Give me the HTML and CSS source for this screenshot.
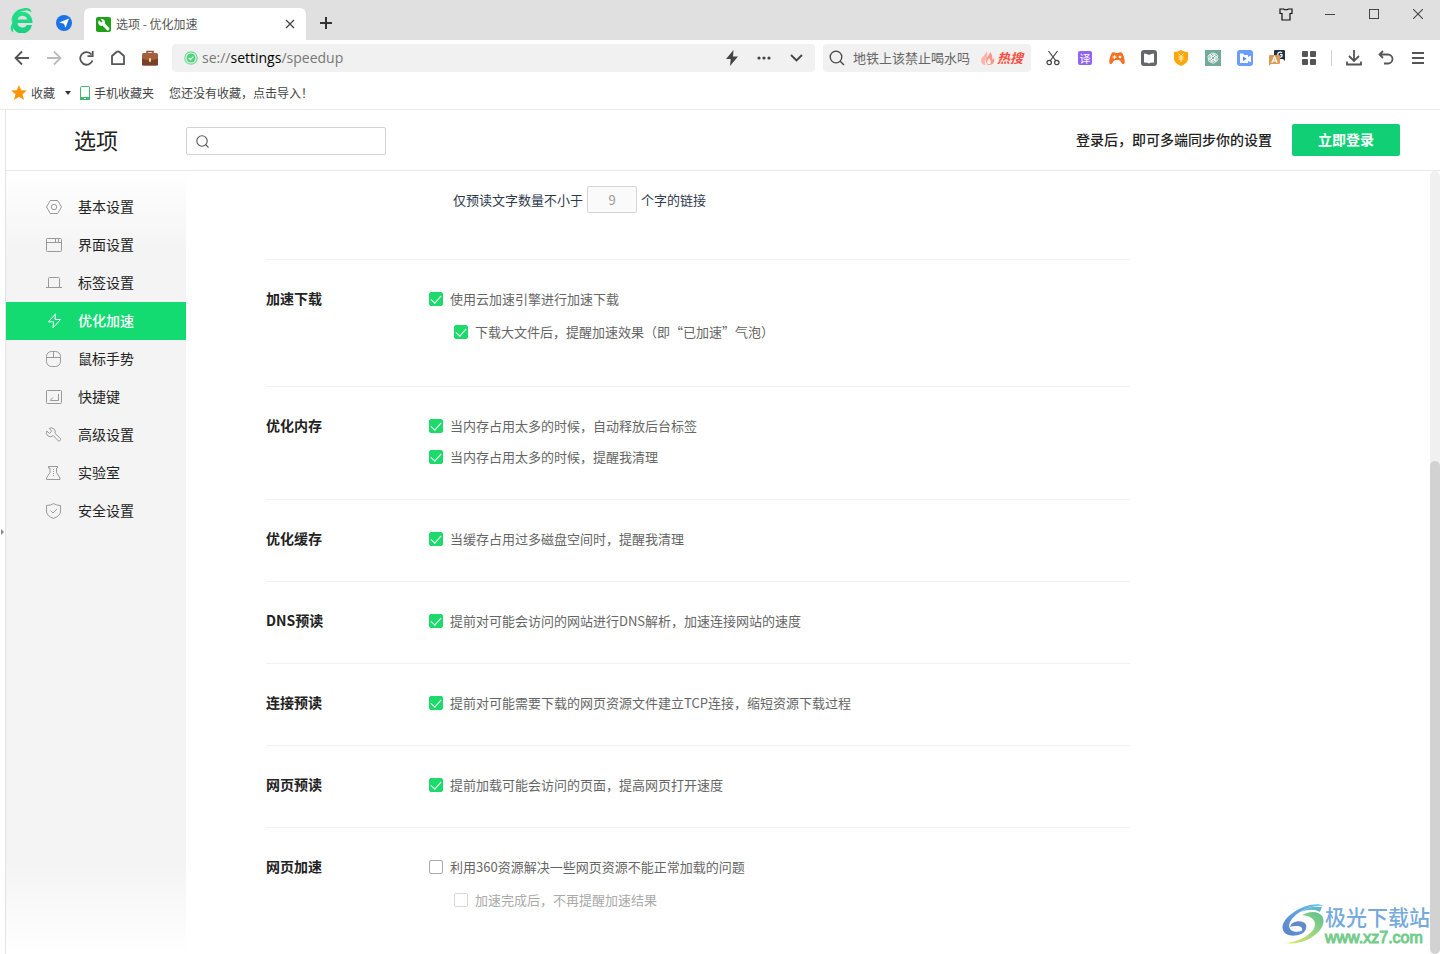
FILE: index.html
```html
<!DOCTYPE html>
<html lang="zh-CN">
<head>
<meta charset="utf-8">
<title>选项 - 优化加速</title>
<link rel="stylesheet" href="styles.css">
</head>
<body>
<header class="chrome">
  <div class="tabbar">
    <button class="logo" aria-label="浏览器菜单"><svg width="24" height="26" viewBox="0 0 24 26"><defs><linearGradient id="lg" x1="0" y1="0" x2="0" y2="1"><stop offset="0" stop-color="#22e08a"/><stop offset="1" stop-color="#17cf80"/></linearGradient></defs><path d="M22.500 16H7.500a5 5 0 0 0 9.300 2h5.200A10 10 0 0 1 2.200 15C2.200 9 6.500 4.800 12.300 4.800S22.700 9 22.500 16zM7.600 12.500h9.700a5 5 0 0 0-9.700 0z" fill="url(#lg)" fill-rule="evenodd"/><path d="M1.500 15C1 7 7 2 14 1.200c4-.5 7.500.8 7.500 4.300C18 2.500 13 3.500 9 5.500 5 7.500 3 11 1.500 15zM2.500 16C0 20 0 24 3.500 25.500 2.500 23 3 21 4.500 20z" fill="#1edc86"/></svg></button>
    <button class="pinned" aria-label="导航"><svg width="16" height="16"><circle cx="8" cy="8" r="8" fill="#1a73e8"/><path d="M13 3.500 9.500 12.800 8 8.800 3.200 7.600z" fill="#fff"/></svg></button>
    <div class="tab">
      <svg width="15" height="15"><rect width="15" height="15" rx="2" fill="#21a01a"/><path d="M3 3.200 5.200 5.400 6.500 4.200 4.500 2.200A3.400 3.400 0 0 1 8.900 6.600L13 10.800A1.500 1.500 0 0 1 10.800 13L6.600 8.800A3.500 3.500 0 0 1 2.200 4.800z" fill="#fff"/></svg>
      <span class="tab-title">选项 - 优化加速</span>
      <button class="tab-close" aria-label="关闭标签"><svg width="10" height="10"><path d="M1 1l8 8M9 1 1 9" stroke="#444" stroke-width="1.3"/></svg></button>
    </div>
    <button class="new-tab" aria-label="新标签"><svg width="12" height="12"><path d="M6 0v12M0 6h12" stroke="#333" stroke-width="2"/></svg></button>
    <div class="window-controls">
      <button aria-label="皮肤"><svg width="14" height="13" fill="none" stroke="#111" stroke-width="1.200"><path d="M1 1h3.500q2.500 1.500 5 0H13v4.500h-2V12H3V5.500H1z"/></svg></button>
      <button aria-label="最小化"><svg width="10" height="10"><path d="M0 5.500h10" stroke="#444"/></svg></button>
      <button aria-label="最大化"><svg width="10" height="10"><rect x=".5" y=".5" width="9" height="9" fill="none" stroke="#444"/></svg></button>
      <button aria-label="关闭"><svg width="10" height="10"><path d="M0 0l10 10M10 0 0 10" stroke="#444" stroke-width="1.100"/></svg></button>
    </div>
  </div>

  <div class="toolbar">
    <div class="tools">
      <button aria-label="后退"><svg width="16" height="16" fill="none" stroke="#555" stroke-width="1.800"><path d="M15 8H2M8 1.500 1.500 8 8 14.500"/></svg></button>
      <button aria-label="前进"><svg width="16" height="16" fill="none" stroke="#bbb" stroke-width="1.800"><path d="M1 8h13M8 1.500 14.500 8 8 14.500"/></svg></button>
      <button aria-label="刷新"><svg width="16" height="16" fill="none" stroke="#555" stroke-width="1.800"><path d="M14.500 10.500A6.300 6.300 0 1 1 13.500 4.500"/><path d="M9.500 6.200h5.200V1"/></svg></button>
      <button aria-label="主页"><svg width="16" height="16" fill="none" stroke="#555" stroke-width="1.800" stroke-linejoin="round"><path d="M2 6 6.500 2q1.500-1 3 0L14 6v8.200H2z"/></svg></button>
      <button aria-label="工具箱"><svg width="18" height="18"><path d="M6 5V2.500h6V5" fill="none" stroke="#9b4a2d" stroke-width="1.500"/><rect x="1" y="4" width="16" height="12.500" rx="1.500" fill="#a3603f"/><path d="M1 9.500q8 3 16 0V15q0 1.500-1.500 1.500h-13Q1 16.500 1 15z" fill="#79402a"/><rect x="8" y="9" width="2" height="4" rx="1" fill="#ffd98a"/></svg></button>
    </div>
    <div class="address">
      <svg width="14" height="14"><circle cx="7" cy="7" r="6.200" fill="none" stroke="#6fdc93" stroke-width="1.200"/><circle cx="7" cy="7" r="4.500" fill="#4fd47c"/><path d="M4.800 7 6.500 8.600 9.400 5.600" fill="none" stroke="#fff" stroke-width="1.300"/></svg>
      <div class="url" role="textbox" aria-label="地址栏" contenteditable="true" spellcheck="false">se://<span class="host">settings</span>/speedup</div>
      <button aria-label="极速模式"><svg width="14" height="16"><path d="M8.500 0 1 9h4.700L5 16l8-9.500H8z" fill="#444"/></svg></button>
      <button aria-label="更多"><svg width="14" height="4" fill="#444"><circle cx="2" cy="2" r="1.600"/><circle cx="7" cy="2" r="1.600"/><circle cx="12" cy="2" r="1.600"/></svg></button>
      <button aria-label="展开"><svg width="13" height="8" fill="none" stroke="#444" stroke-width="1.800"><path d="M1 1l5.500 5.500L12 1"/></svg></button>
    </div>
    <div class="search">
      <svg width="16" height="16" fill="none" stroke="#444" stroke-width="1.300"><circle cx="7" cy="7" r="5.800"/><path d="M11.200 11.200 15 15"/></svg>
      <input class="search-input" type="text" aria-label="搜索" placeholder="地铁上该禁止喝水吗">
      <a class="hot" href="#"><svg width="14" height="14"><path d="M5 0C6 3 1 5 0 9c0 3 2 5 5 5-2-2-1-5 1-7 0-3 1-4-1-7z" fill="#ffb3ab"/><path d="M9 1c0 3-4 5-4 9 0 2 1 4 3 4 4 0 6-3 5-7l-2 2c1-3 0-6-2-8z" fill="#ff948a"/><path d="M8 7c-3 4-2 6 0 6s3-2 0-6z" fill="#fff0ee"/></svg><span>热搜</span></a>
    </div>
    <div class="tools">
      <button aria-label="截图"><svg width="14" height="16" fill="none" stroke="#444" stroke-width="1.200"><path d="M2.500 1 10 11M11.500 1 4 11"/><circle cx="3.200" cy="12.500" r="2.200"/><circle cx="10.800" cy="12.500" r="2.200"/></svg></button>
      <button aria-label="翻译"><span class="badge-translate">译</span></button>
      <button aria-label="游戏"><svg width="16" height="14"><path d="M2.500 2.500C4 0 6 2 8 2s4-2 5.500.5C15.500 6 16.500 12 15 13c-2 1-3-3-5-4H6c-2 1-3 5-5 4C-.5 12 .5 6 2.500 2.500z" fill="#f57224"/><path d="M5.500 4v4M3.500 6h4" stroke="#fff" stroke-width="1.200"/><circle cx="11" cy="6" r="1.300" fill="#fff"/></svg></button>
      <button aria-label="阅读"><svg width="16" height="16"><rect width="16" height="16" rx="3" fill="#66676d"/><path d="M3 3.500q3 0 5 1.500 2-1.500 5-1.500v9q-3-.5-5 1-2-1.500-5-1z" fill="#fff"/></svg></button>
      <button aria-label="优惠"><svg width="16" height="16"><path d="M8 0q3 2 7 2v7q0 4-7 7-7-3-7-7V2q4 0 7-2z" fill="#ffa60a"/><path d="M5.500 3.500 8 6.500l2.500-3M5.500 7h5M5.500 9.200h5M8 6.500V12" stroke="#fff3c9" stroke-width="1" fill="none"/></svg></button>
      <button aria-label="AI 助手"><svg width="16" height="16"><rect width="16" height="16" fill="#74aa9c"/><g fill="none" stroke="#fff" stroke-width=".8"><path id="petal" d="M5 9.800V5.500a2.600 2.600 0 0 1 5-1M8 6.300 11.300 8.200"/><use href="#petal" transform="rotate(60 8 8)"/><use href="#petal" transform="rotate(120 8 8)"/><use href="#petal" transform="rotate(180 8 8)"/><use href="#petal" transform="rotate(240 8 8)"/><use href="#petal" transform="rotate(300 8 8)"/></g></svg></button>
      <button aria-label="录屏"><svg width="16" height="16"><rect width="16" height="16" rx="3" fill="#6a9dff"/><path d="M3 3.500h3l1.500 1.500H11v2l3-1.500v7L11 11v2H3z" fill="#fff"/><path d="M6 6.500v4.500L9.500 8.800z" fill="#4c82f2"/></svg></button>
      <button aria-label="文字转换"><svg width="16" height="16"><path d="M6 0h9q1 0 1 1v10l-2-2H5V1q0-1 1-1z" fill="#1f3349"/><path d="M13 2.800a2.500 2.500 0 1 0 0 3.500V4.700h-2" fill="none" stroke="#fff" stroke-width="1.200"/><path d="M1 5h9q1 0 1 1v7q0 1-1 1H2l-2 2V6q0-1 1-1z" fill="#dc9a57"/><path d="M2.800 12.800 5.500 6.800l2.700 6M4 10.800h3" fill="none" stroke="#fff" stroke-width="1.200"/></svg></button>
      <button aria-label="扩展"><svg width="14" height="14" fill="#555"><rect width="6" height="6" rx="1"/><rect x="8" width="6" height="6" rx="1"/><rect y="8" width="6" height="6" rx="1"/><rect x="8" y="8" width="6" height="6" rx="1"/></svg></button>
    </div>
    <div class="separator"></div>
    <div class="tools">
      <button aria-label="下载"><svg width="16" height="16" fill="none" stroke="#555" stroke-width="1.800"><path d="M8 0v10.500M3 6l5 5 5-5M1 11.500v3h14v-3"/></svg></button>
      <button aria-label="恢复"><svg width="16" height="16" fill="none" stroke="#555" stroke-width="1.800"><path d="M2 4.500h8a4.500 4.500 0 0 1 0 9H6M5 1 1.500 4.500 5 8"/></svg></button>
      <button aria-label="菜单"><svg width="12" height="12"><path d="M0 1h12M0 6h12M0 11h12" stroke="#555" stroke-width="1.800"/></svg></button>
    </div>
  </div>

  <nav class="bookmarks" aria-label="收藏栏">
    <button class="bookmark"><svg width="16" height="15"><path d="M8 0l2.200 5.200 5.800.4-4.500 3.700L13 15l-5-3.200L3 15l1.500-5.700L0 5.600l5.800-.4z" fill="#ff9500"/></svg><span>收藏</span></button>
    <button class="caret" aria-label="展开收藏"><svg width="6" height="4"><path d="M0 0h6L3 4z" fill="#333"/></svg></button>
    <button class="bookmark"><svg width="10" height="14"><rect x=".5" y=".5" width="9" height="13" rx="1" fill="#fff" stroke="#3fba6e"/><path d="M0 11h10v3H0z" fill="#3fba6e"/><path d="M4 12.500h2" stroke="#fff"/></svg><span>手机收藏夹</span></button>
    <a class="import" href="#">您还没有收藏，点击导入！</a>
  </nav>
</header>

<div class="viewport">
  <button class="side-handle" aria-label="展开侧栏"><svg width="3" height="6"><path d="M0 0l3 3-3 3z" fill="#888"/></svg></button>
  <div class="page">
    <header class="page-header">
      <h1>选项</h1>
      <label class="page-search"><svg width="13" height="13" fill="none" stroke="#555" stroke-width="1.100"><circle cx="6" cy="6" r="5.200"/><path d="M9.700 9.700 12.500 12.500"/></svg><input type="text" aria-label="搜索设置"></label>
      <p class="login-hint">登录后，即可多端同步你的设置</p>
      <button class="login">立即登录</button>
    </header>
    <div class="page-body">
      <nav class="sidebar" aria-label="设置分类">
        <a href="#"><svg viewBox="0 0 16 16"><path d="M4.300 1.500h7.400L15.500 8l-3.800 6.500H4.300L.5 8z"/><circle cx="8" cy="8" r="2.700"/></svg>基本设置</a>
        <a href="#"><svg viewBox="0 0 16 16"><rect x=".5" y="1.500" width="15" height="13" rx="1"/><path d="M.5 5.500h15M9.500 2v3M12.500 2v3"/></svg>界面设置</a>
        <a href="#"><svg viewBox="0 0 16 16"><path d="M2.500 12.500v-9q0-1 1-1h9q1 0 1 1v9M0 12.500h16"/></svg>标签设置</a>
        <a href="#" class="active" aria-current="page"><svg viewBox="0 0 16 16"><path d="M9.500.8 2.500 8.800h5L7 15l7.500-8.500H9z"/></svg>优化加速</a>
        <a href="#"><svg viewBox="0 0 16 16"><rect x=".5" y=".5" width="14" height="15" rx="5"/><path d="M.5 6.500h14M7.500.5v6"/></svg>鼠标手势</a>
        <a href="#"><svg viewBox="0 0 16 16"><rect x=".5" y="1.500" width="15" height="13" rx="1"/><path d="M12.500 5v6.500h-8M7 8.500l-2.800 3"/></svg>快捷键</a>
        <a href="#"><svg viewBox="0 0 16 16"><path d="M3.300 1.400A4 4 0 0 1 9 6.300l5.400 5.200q.6 1-.2 2t-2 .3L7.300 8.500A4 4 0 0 1 .8 4L3.500 6.400 5.700 4.300z"/></svg>高级设置</a>
        <a href="#"><svg viewBox="0 0 16 16"><path d="M2.500 1.500h9v1.500h-1v4.500l3.500 5.500v1.500H.5V13L4 7.500V3H2.500z"/><path d="M7.500 4v8" stroke-dasharray="1 1"/></svg>实验室</a>
        <a href="#"><svg viewBox="0 0 16 16"><path d="M7.500.6q3 1.900 7 1.900V8q0 5-7 7.400Q.5 13 .5 8V2.500q4 0 7-1.900z"/><path d="M4.500 7.500 7 10l4-4"/></svg>安全设置</a>
      </nav>
      <main class="settings">
        <section class="row first">
          <div class="count"><label for="min">仅预读文字数量不小于</label><input id="min" type="text" value="9" disabled><span>个字的链接</span></div>
        </section>
        <section class="row"><h2>加速下载</h2><div class="options">
          <label><input type="checkbox" checked>使用云加速引擎进行加速下载</label>
          <label class="sub"><input type="checkbox" checked>下载大文件后，提醒加速效果（即“已加速”气泡）</label>
        </div></section>
        <section class="row"><h2>优化内存</h2><div class="options">
          <label><input type="checkbox" checked>当内存占用太多的时候，自动释放后台标签</label>
          <label><input type="checkbox" checked>当内存占用太多的时候，提醒我清理</label>
        </div></section>
        <section class="row"><h2>优化缓存</h2><div class="options">
          <label><input type="checkbox" checked>当缓存占用过多磁盘空间时，提醒我清理</label>
        </div></section>
        <section class="row"><h2>DNS预读</h2><div class="options">
          <label><input type="checkbox" checked>提前对可能会访问的网站进行DNS解析，加速连接网站的速度</label>
        </div></section>
        <section class="row"><h2>连接预读</h2><div class="options">
          <label><input type="checkbox" checked>提前对可能需要下载的网页资源文件建立TCP连接，缩短资源下载过程</label>
        </div></section>
        <section class="row"><h2>网页预读</h2><div class="options">
          <label><input type="checkbox" checked>提前加载可能会访问的页面，提高网页打开速度</label>
        </div></section>
        <section class="row"><h2>网页加速</h2><div class="options">
          <label><input type="checkbox">利用360资源解决一些网页资源不能正常加载的问题</label>
          <label class="sub off"><input type="checkbox" disabled>加速完成后，不再提醒加速结果</label>
        </div></section>
      </main>
      <div class="scrollbar"><div class="thumb"></div></div>
    </div>
  </div>
</div>

<div class="watermark">
  <svg width="42" height="42" viewBox="0 0 42 42"><defs><linearGradient id="wb" x1="0" y1="1" x2="1" y2="0"><stop offset="0" stop-color="#5a7fcb"/><stop offset="1" stop-color="#6cc3ee"/></linearGradient><linearGradient id="wg" x1="0" y1="1" x2="1" y2="0"><stop offset="0" stop-color="#e3ec6a"/><stop offset="1" stop-color="#5cbf92"/></linearGradient></defs><path d="M42 3C36-1 22 2 12 9 3 15-1 22 1 27c2 6 11 7 18 4 3-1 5-4 5-6-4 4-11 5-15 2-5-5 1-13 9-18C25 5 34 2 42 3z" fill="url(#wb)"/><path d="M8 24c1-5 8-7 13-5 4 2 4 5 2 8-1 1-2 2-3 2 1-4-1-6-5-6-3 0-5 0-7 1z" fill="#6289cc"/><path d="M20 12c8-4 16-4 20 1 5 8-3 18-15 24-7 3-14 4-22 3 12-1 23-6 28-13 5-8 0-14-11-15z" fill="url(#wg)"/><path d="M38 4C31 3 24 5 19 9c7-3 14-3 19 0l2-5z" fill="#62b9c4"/></svg>
  <div class="watermark-text"><strong>极光下载站</strong><span>www.xz7.com</span></div>
</div>
</body>
</html>
```
FILE: styles.css
```css
* { box-sizing: border-box; }

body {
  margin: 0;
  min-height: 100vh;
  display: flex;
  flex-direction: column;
  background: #fff;
  color: #222;
  font: 13px/20px "Noto Sans CJK SC", sans-serif;
}

button, input { font: inherit; color: inherit; }

button {
  display: inline-flex;
  align-items: center;
  justify-content: center;
  padding: 0;
  border: 0;
  background: none;
}

a { color: inherit; text-decoration: none; }
h1, h2, p { margin: 0; }
svg { flex: none; display: block; }

/* Browser frame */
.chrome { border-bottom: 1px solid #ebebeb; }
.tabbar { display: flex; height: 40px; background: #e0e0e0; }
.logo { width: 44px; }
.pinned { width: 40px; padding-top: 6px; }

.tab {
  display: flex;
  align-items: center;
  gap: 5px;
  width: 222px;
  height: 32px;
  margin-top: 8px;
  padding: 0 6px 0 12px;
  border-radius: 6px 6px 0 0;
  background: #fff;
  color: #555;
  font-size: 12px;
}

.tab-title { flex: 1; }
.tab-close { width: 20px; height: 20px; }
.new-tab { width: 40px; padding-top: 6px; }
.window-controls { display: flex; height: 28px; margin-left: auto; }
.window-controls button { width: 44px; }

.toolbar { display: flex; align-items: center; height: 36px; padding: 0 6px; }
.tools { display: flex; }
.tools button { width: 32px; height: 28px; }

.address {
  display: flex;
  flex: 1;
  align-items: center;
  height: 28px;
  margin: 0 8px 0 6px;
  padding: 0 3px 0 12px;
  border-radius: 4px;
  background: #f1f1f1;
}

.address button { width: 32px; height: 28px; }
.url {
  flex: 1;
  margin-left: 4px;
  color: #777;
  font-family: "Open Sans", sans-serif;
  font-size: 14px;
  outline: 0;
}
.host { color: #000; }

.search {
  display: flex;
  align-items: center;
  gap: 8px;
  width: 208px;
  height: 28px;
  margin-right: 6px;
  padding: 0 8px 0 6px;
  border-radius: 4px;
  background: #f1f1f1;
}

.search-input {
  flex: 1;
  min-width: 0;
  height: 20px;
  padding: 0;
  border: 0;
  outline: 0;
  background: none;
}
.search-input::placeholder { color: #666; opacity: 1; }
.hot { display: flex; align-items: center; gap: 2px; color: #ff4d42; font-weight: 700; font-style: italic; }

.badge-translate {
  width: 14px;
  height: 14px;
  border-radius: 2px;
  background: #9263f5;
  color: #fff;
  font-size: 11px;
  line-height: 14px;
}

.separator { width: 1px; height: 16px; margin: 0 6px; background: #d0d0d0; }

.bookmarks {
  display: flex;
  align-items: center;
  height: 33px;
  padding-left: 11px;
  color: #444;
  font-size: 12px;
}
.bookmark { gap: 4px; }
.caret { width: 25px; height: 20px; }
.import { margin-left: 15px; }

/* Settings page */
.viewport { display: flex; flex: 1; }
.side-handle { width: 5px; }
.page { display: flex; flex: 1; flex-direction: column; border-left: 1px solid #e4e4e4; }

.page-header {
  display: flex;
  align-items: center;
  height: 61px;
  padding-right: 40px;
  border-bottom: 1px solid #e8e8e8;
}
.page-header h1 { width: 180px; padding-bottom: 2px; text-align: center; font-size: 22px; font-weight: 400; line-height: 32px; }

.page-search {
  display: flex;
  align-items: center;
  gap: 8px;
  width: 200px;
  height: 28px;
  margin-top: 2px;
  padding: 0 9px;
  border: 1px solid #d2d2d2;
  border-radius: 2px;
}
.page-search input { flex: 1; min-width: 0; border: 0; outline: 0; background: none; }
.login-hint { margin-left: auto; padding-bottom: 2px; font-size: 14px; font-weight: 500; }
.login {
  width: 108px;
  height: 32px;
  margin-left: 20px;
  padding-bottom: 2px;
  border-radius: 2px;
  background: #10cf74;
  color: #fff;
  font-size: 14px;
  font-weight: 700;
}

.page-body { display: flex; flex: 1; }

.sidebar {
  width: 180px;
  padding-top: 17px;
  background: linear-gradient(#fff, #f4f4f4 80px, #f4f4f4 calc(100% - 90px), #fff);
}
.sidebar a {
  display: flex;
  align-items: center;
  gap: 16px;
  height: 38px;
  padding: 0 0 2px 40px;
  font-size: 14px;
}
.sidebar svg { width: 16px; height: 16px; margin-top: 2px; fill: none; stroke: #999; }
.sidebar .active { background: #13db72; color: #fff; font-weight: 500; }
.sidebar .active svg { stroke: #fff; }

.settings { flex: 1; padding: 15px 300px 0 80px; }

.row {
  display: flex;
  padding: 29px 0 32px;
  border-top: 1px solid #f2f2f2;
}
.row.first { padding: 0 0 46px 187px; border: 0; }
.row:last-child { padding-bottom: 0; }
.row h2 { width: 163px; font-size: 14px; font-weight: 700; line-height: 18px; }

.count { display: flex; align-items: center; gap: 4px; color: #2f3a4c; }
.count input {
  width: 50px;
  height: 27px;
  padding: 0;
  border: 1px solid #d4d4d4;
  border-radius: 2px;
  background: #fafafa;
  color: #999;
  text-align: center;
}

.options { display: flex; flex-direction: column; gap: 11px; color: #666; }
.options label { display: flex; align-items: center; gap: 7px; }
.options .sub { margin: 2px 0 0 25px; }
.options .sub:not(.off) { padding-bottom: 12px; }
.options .off { color: #aaa; }

input[type="checkbox"] {
  appearance: none;
  display: grid;
  justify-content: center;
  width: 14px;
  height: 14px;
  margin: 0;
  border: 1px solid #aaa;
  border-radius: 2px;
  background: #fff;
}
input[type="checkbox"]:disabled { border-color: #d8d8d8; }
input[type="checkbox"]:checked { border-color: #1cdb6b; background: #1cdb6b; }
input[type="checkbox"]:checked::before {
  content: "";
  width: 5px;
  height: 9px;
  border: solid #fff;
  border-width: 0 1px 1px 0;
  transform: rotate(42deg);
}

.scrollbar { display: flex; flex-direction: column; justify-content: flex-end; width: 10px; border-radius: 5px; background: #f0f0f0; }
.thumb { height: 63%; border-radius: 5px; background: #d2d2d2; }

.watermark { position: absolute; right: 10px; bottom: 8px; display: flex; align-items: center; gap: 1px; }
.watermark-text { display: flex; flex-direction: column; color: #76a9dc; }
.watermark-text strong { font-size: 21px; font-weight: 500; line-height: 28px; }
.watermark-text span { color: #74cc8c; font: 16px/16px "Liberation Sans", sans-serif; -webkit-text-stroke: 1px #74cc8c; }
```
